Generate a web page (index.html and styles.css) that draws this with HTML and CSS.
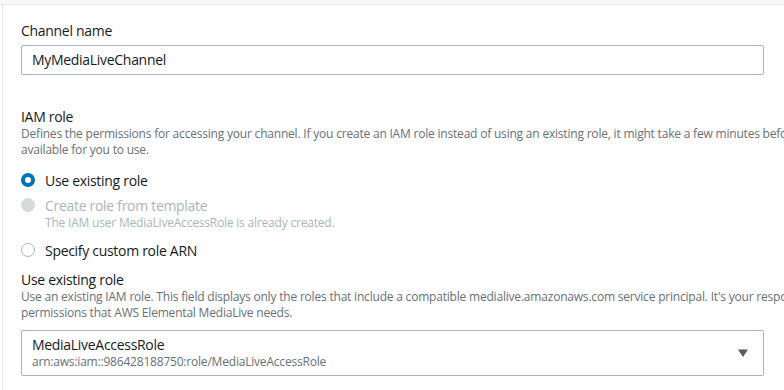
FILE: index.html
```html
<!DOCTYPE html>
<html>
<head>
<meta charset="utf-8">
<link rel="stylesheet" href="styles.css">
</head>
<body>
<div class="topband"></div>
<div class="panel">
  <div class="field">
    <div class="label">Channel name</div>
    <div class="input">MyMediaLiveChannel</div>
  </div>

  <div class="field iam">
    <div class="label">IAM role</div>
    <div class="desc">Defines the permissions for accessing your channel. If you create an IAM role instead of using an existing role, it might take a few minutes before it's<br>available for you to use.</div>
    <div class="radios">
      <div class="radio checked"><span class="dot"></span><span class="rtext">Use existing role</span></div>
      <div class="radio disabled"><span class="dot"></span><span class="rtext">Create role from template</span></div>
      <div class="hint">The IAM user MediaLiveAccessRole is already created.</div>
      <div class="radio last"><span class="dot"></span><span class="rtext">Specify custom role ARN</span></div>
    </div>
  </div>

  <div class="field existing">
    <div class="label">Use existing role</div>
    <div class="desc">Use an existing IAM role. This field displays only the roles that include a compatible medialive.amazonaws.com service principal. It's your responsibility to<br>permissions that AWS Elemental MediaLive needs.</div>
    <div class="select">
      <div class="sel-text">
        <div class="sel-main">MediaLiveAccessRole</div>
        <div class="sel-sub">arn:aws:iam::986428188750:role/MediaLiveAccessRole</div>
      </div>
      <svg class="caret" width="12" height="10" viewBox="0 0 12 10"><path d="M1 1.5 H11 L6 9 Z" fill="#545b64"/></svg>
    </div>
  </div>
</div>
</body>
</html>
```

FILE: styles.css
```css
html, body {
  margin: 0;
  padding: 0;
  background: #ffffff;
  overflow: hidden;
  width: 784px;
  height: 390px;
}
body {
  font-family: "Open Sans", "Liberation Sans", sans-serif;
  color: #16191f;
}
.topband {
  height: 4px;
  background: #f7f7f7;
  border-bottom: 1px solid #eaeded;
}
.panel {
  margin-left: 2px;
  border-left: 1px solid #e3e6e6;
  padding: 16px 0 0 18px;
  height: 400px;
}
.label {
  font-size: 14px;
  line-height: 20px;
  letter-spacing: -0.3px;
  color: #16191f;
}
.input {
  margin-top: 4px;
  width: 721px;
  height: 28px;
  border: 1px solid #aab7b8;
  border-radius: 2px;
  padding: 0 10px;
  font-size: 14px;
  letter-spacing: -0.3px;
  line-height: 28px;
  color: #16191f;
}
.iam {
  margin-top: 33px;
}
.iam .label, .existing .label {
  line-height: 18px;
}
.desc {
  width: 900px;
  white-space: nowrap;
  font-size: 12px;
  line-height: 16px;
  letter-spacing: -0.2px;
  color: #687078;
}
.radios {
  margin-top: 12px;
  display: flex;
  flex-direction: column;
}
.radio {
  display: flex;
  align-items: center;
  height: 20px;
  font-size: 14px;
  letter-spacing: -0.3px;
}
.radio + .radio {
  margin-top: 5px;
}
.radio.last {
  margin-top: 9px;
}
.dot {
  width: 12px;
  height: 12px;
  border-radius: 50%;
  border: 1px solid #aab7b8;
  background: #fff;
  box-sizing: content-box;
  margin-right: 10px;
  flex: none;
}
.radio.checked .dot {
  width: 6px;
  height: 6px;
  border: 4px solid #0073bb;
}
.radio.disabled .dot {
  background: #d5dbdb;
  border-color: #d5dbdb;
}
.radio.disabled .rtext {
  color: #aab7b8;
}
.hint {
  margin-left: 24px;
  font-size: 12px;
  line-height: 16px;
  letter-spacing: -0.2px;
  color: #aab7b8;
}
.existing {
  margin-top: 11px;
}
.select {
  margin-top: 9px;
  width: 743px;
  height: 46px;
  border: 1px solid #aab7b8;
  border-radius: 2px;
  display: flex;
  align-items: center;
  justify-content: space-between;
  padding: 0 14px 0 10px;
  box-sizing: border-box;
}
.sel-main {
  font-size: 14px;
  line-height: 18px;
  letter-spacing: -0.3px;
}
.sel-sub {
  font-size: 12px;
  line-height: 16px;
  letter-spacing: -0.2px;
  color: #687078;
}
.caret {
  display: block;
}
```
